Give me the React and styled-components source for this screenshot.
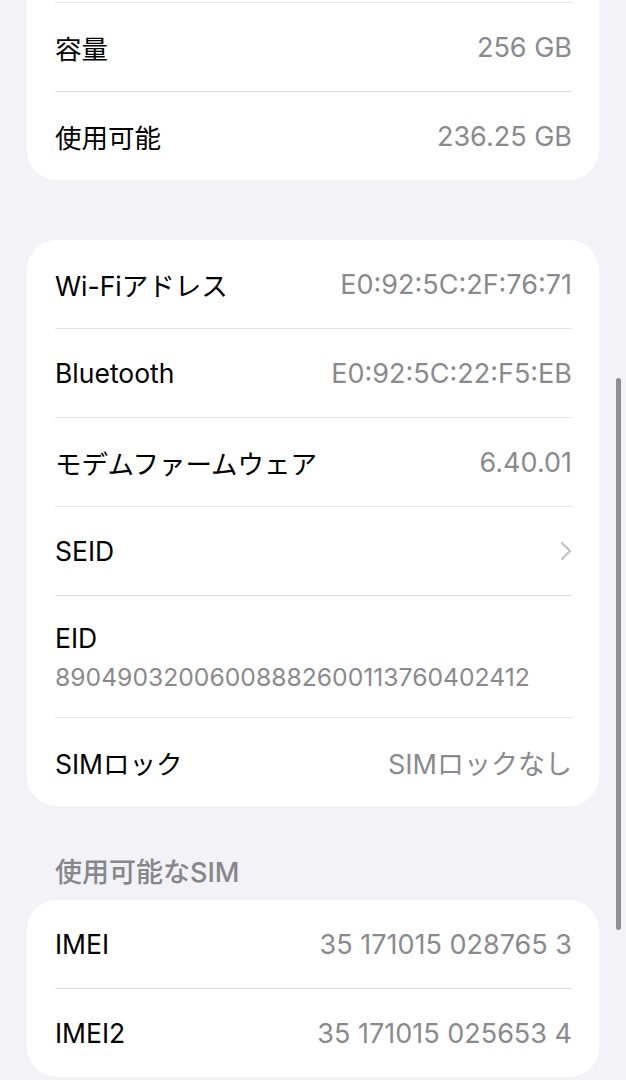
import React from "react";
import styled, { createGlobalStyle } from "styled-components";

const Global = createGlobalStyle`
  html, body { margin: 0; padding: 0; background: #f2f2f7; }
  body {
    font-family: "Inter", "Noto Sans CJK JP", sans-serif;
    -webkit-font-smoothing: antialiased;
    overflow: hidden;
  }
`;

const Page = styled.div`
  width: 626px;
  height: 1080px;
  overflow: hidden;
  position: relative;
  background: #f2f2f7;
`;

const Content = styled.div`
  margin-top: -86px;
  padding: 0 27px;
  display: flex;
  flex-direction: column;
`;

const Card = styled.div`
  background: #ffffff;
  border-radius: 30px;
  padding: 0 27px 0 28px;
  margin-top: ${(p) => p.$gap || 0}px;
  display: flex;
  flex-direction: column;
`;

const Row = styled.div`
  height: ${(p) => p.$h || 88}px;
  display: flex;
  align-items: center;
  justify-content: space-between;
  border-bottom: ${(p) => (p.$last ? "none" : "1px solid #e3e3e6")};
  font-size: 26.5px;
`;

const Label = styled.span`
  color: #000;
`;

const Value = styled.span`
  color: #8a8a8e;
  display: flex;
  align-items: center;
  font-size: 27px;
`;

const Stack = styled.div`
  height: 121px;
  display: flex;
  flex-direction: column;
  justify-content: center;
  gap: 8px;
  border-bottom: 1px solid #e3e3e6;
  font-size: 26.5px;
`;

const SubValue = styled.span`
  color: #8a8a8e;
  font-size: 24.7px;
`;

const Header = styled.div`
  margin-top: 43px;
  padding-left: 28px;
  height: 42px;
  display: flex;
  align-items: center;
  color: #86868b;
  font-size: 27px;
  font-weight: 500;
`;

const ScrollBar = styled.div`
  position: absolute;
  right: 5px;
  top: 378px;
  width: 5px;
  height: 552px;
  border-radius: 3px;
  background: #8e8e93;
`;

const Chevron = () => (
  <svg width="12" height="20" viewBox="0 0 12 20" fill="none">
    <path d="M2 2 L10 10 L2 18" stroke="#c4c4c7" strokeWidth="2.4" strokeLinecap="round" strokeLinejoin="round" />
  </svg>
);

export default function App() {
  return (
    <Page>
      <Global />
      <Content>
        <Card>
          <Row>
            <Label>モデル番号</Label>
            <Value>MTUW3J/A</Value>
          </Row>
          <Row>
            <Label>容量</Label>
            <Value>256 GB</Value>
          </Row>
          <Row $last>
            <Label>使用可能</Label>
            <Value>236.25 GB</Value>
          </Row>
        </Card>
        <Card $gap={60}>
          <Row>
            <Label>Wi-Fiアドレス</Label>
            <Value>E0:92:5C:2F:76:71</Value>
          </Row>
          <Row>
            <Label>Bluetooth</Label>
            <Value>E0:92:5C:22:F5:EB</Value>
          </Row>
          <Row>
            <Label>モデムファームウェア</Label>
            <Value>6.40.01</Value>
          </Row>
          <Row>
            <Label>SEID</Label>
            <Value><Chevron /></Value>
          </Row>
          <Stack>
            <Label>EID</Label>
            <SubValue>89049032006008882600113760402412</SubValue>
          </Stack>
          <Row $last>
            <Label>SIMロック</Label>
            <Value>SIMロックなし</Value>
          </Row>
        </Card>
        <Header>使用可能なSIM</Header>
        <Card $gap={9}>
          <Row>
            <Label>IMEI</Label>
            <Value>35 171015 028765 3</Value>
          </Row>
          <Row $last>
            <Label>IMEI2</Label>
            <Value>35 171015 025653 4</Value>
          </Row>
        </Card>
      </Content>
      <ScrollBar />
    </Page>
  );
}
